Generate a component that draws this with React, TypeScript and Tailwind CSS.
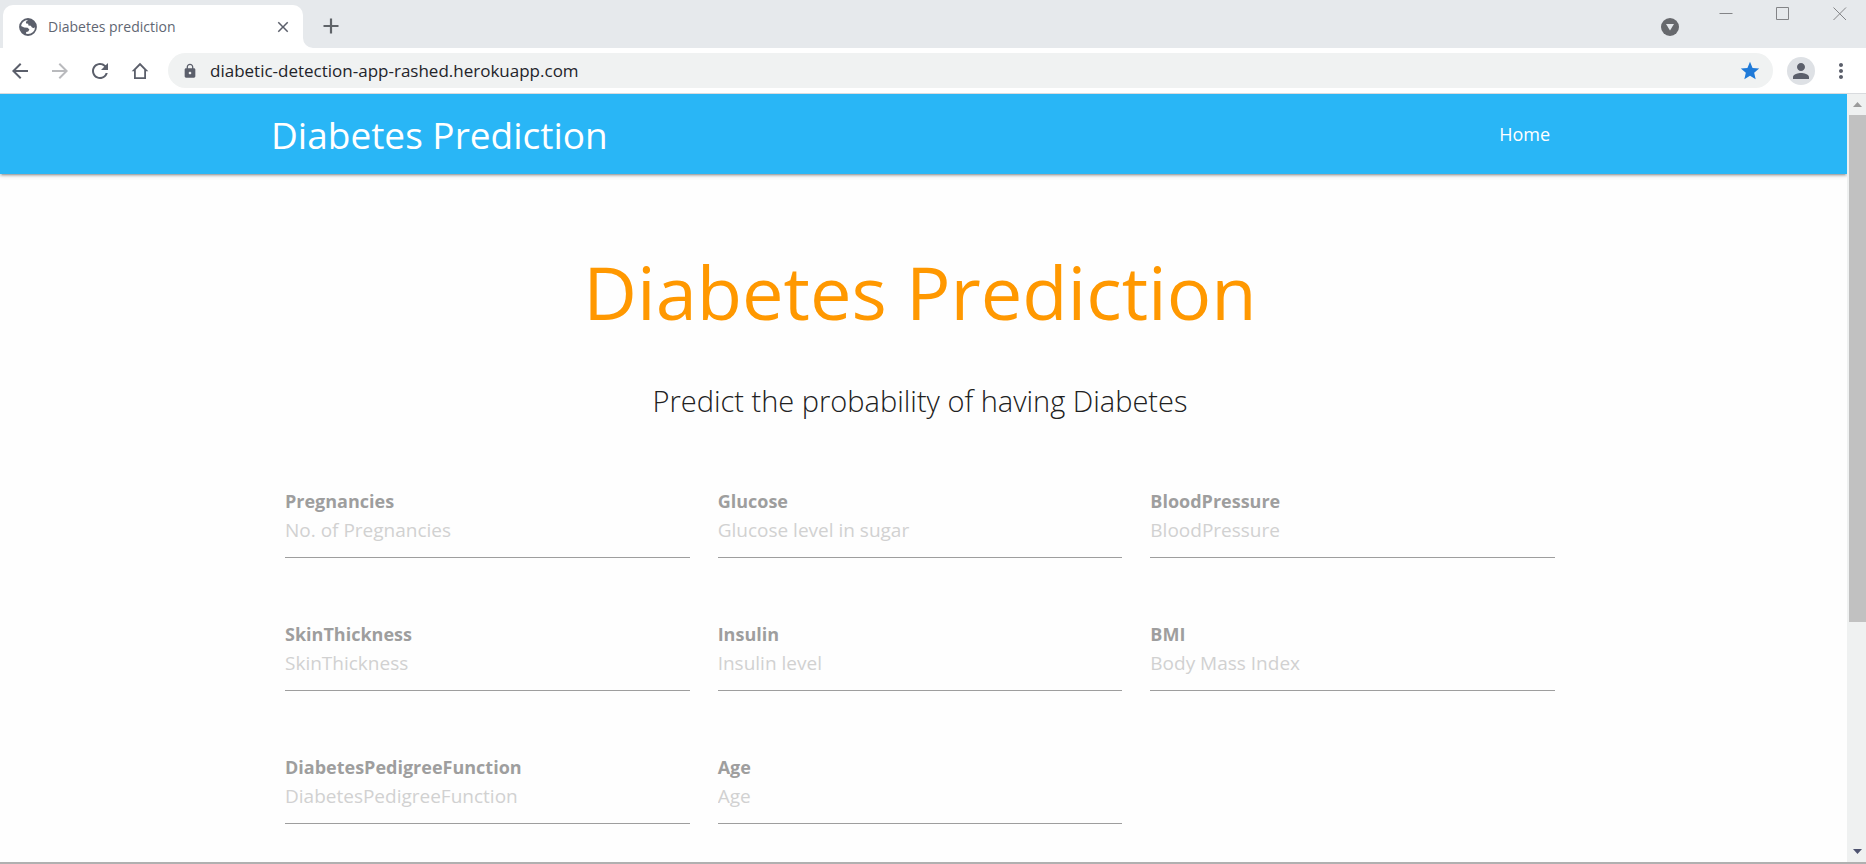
import React from "react";
import {
  MdArrowBack,
  MdArrowForward,
  MdClose,
  MdLock,
  MdMoreVert,
  MdPerson,
  MdRefresh,
  MdStar,
} from "react-icons/md";

type Field = { id: string; label: string; placeholder: string };

const fields: Field[] = [
  { id: "pregnancies", label: "Pregnancies", placeholder: "No. of Pregnancies" },
  { id: "glucose", label: "Glucose", placeholder: "Glucose level in sugar" },
  { id: "blood-pressure", label: "BloodPressure", placeholder: "BloodPressure" },
  { id: "skin-thickness", label: "SkinThickness", placeholder: "SkinThickness" },
  { id: "insulin", label: "Insulin", placeholder: "Insulin level" },
  { id: "bmi", label: "BMI", placeholder: "Body Mass Index" },
  { id: "pedigree", label: "DiabetesPedigreeFunction", placeholder: "DiabetesPedigreeFunction" },
  { id: "age", label: "Age", placeholder: "Age" },
];

function GlobeIcon() {
  return (
    <svg viewBox="0 0 18 18" className="size-[18px]" aria-hidden="true">
      <circle cx="9" cy="9" r="8" fill="#fff" stroke="#5b5f6b" strokeWidth="1.8" />
      <path
        fill="#5b5f6b"
        d="M8.6 1.2c3.8-.4 7.4 2.6 8 6.6l-1.4 2.4-2.2-.6-1.2-1.8-2.4-.4-.2-1.6-2-.2-.4-1.8 1.6-1zM1 7.6l4.2 1.8 3.4.4 1.8 1.8-1.2 2-2 .4-.4 2.6C3.600 15.400 1 12 1 7.600z"
      />
    </svg>
  );
}

function HomeIcon() {
  return (
    <svg viewBox="0 0 24 24" className="size-6" fill="currentColor" aria-hidden="true">
      <path
        fillRule="evenodd"
        d="M12 3.800 3.700 12.200H6V20h12v-7.800h2.300zM12 6.500l4.200 4.200v7.500H7.800v-7.500z"
      />
    </svg>
  );
}

function TabStrip() {
  return (
    <div className="flex h-12 items-start bg-[#e6e9ec] pl-[3px]">
      <div className="relative mt-[5px] flex h-[43px] w-[300px] items-center rounded-t-[10px] bg-white pr-[10px] pl-4">
        <GlobeIcon />
        <span className="ml-[11px] flex-1 text-sm text-[#5f6673]">Diabetes prediction</span>
        <button type="button" aria-label="Close tab" className="flex size-5 items-center justify-center text-[#5b5f6b]">
          <MdClose className="size-[18px]" />
        </button>
        <svg viewBox="0 0 10 10" className="absolute bottom-0 left-full size-[10px]" aria-hidden="true">
          <path d="M0 0v10h10A10 10 0 0 1 0 0z" fill="#fff" />
        </svg>
      </div>
      <button type="button" aria-label="New tab" className="mt-4 ml-[18px] flex size-5 items-center justify-center">
        <svg viewBox="0 0 16 16" className="size-4" stroke="#5f6368" strokeWidth="2.2" aria-hidden="true">
          <path d="M8 .5v15M.5 8h15" />
        </svg>
      </button>
      <div className="ml-auto flex items-start">
        <button type="button" aria-label="Search tabs" className="mt-[18px] mr-10">
          <svg viewBox="0 0 18 18" className="size-[18px]" aria-hidden="true">
            <circle cx="9" cy="9" r="9" fill="#67696d" />
            <path d="M5 6h8l-4 6.500z" fill="#e6e9ec" />
          </svg>
        </button>
        <div className="mt-[7px] mr-[19px] flex gap-[43px]">
          <button type="button" aria-label="Minimize">
            <svg viewBox="0 0 14 14" className="size-[14px]" stroke="#838487" aria-hidden="true">
              <path d="M.5 6.500h13" />
            </svg>
          </button>
          <button type="button" aria-label="Maximize">
            <svg viewBox="0 0 14 14" className="size-[14px]" fill="none" stroke="#838487" aria-hidden="true">
              <path d="M.5.5h12v12H.5z" />
            </svg>
          </button>
          <button type="button" aria-label="Close window">
            <svg viewBox="0 0 14 14" className="size-[14px]" stroke="#838487" aria-hidden="true">
              <path d="m.5.500 12.500 12.500M13 .5.5 13" />
            </svg>
          </button>
        </div>
      </div>
    </div>
  );
}

function Toolbar() {
  return (
    <div className="flex h-[46px] items-center border-b border-[#d9dbde] bg-white pr-[13px] pl-2 text-[#5b5f6b]">
      <div className="flex gap-4">
        <button type="button" aria-label="Back">
          <MdArrowBack className="size-6" />
        </button>
        <button type="button" aria-label="Forward" className="text-[#b9babd]">
          <MdArrowForward className="size-6" />
        </button>
        <button type="button" aria-label="Reload">
          <MdRefresh className="size-6" />
        </button>
        <button type="button" aria-label="Home page">
          <HomeIcon />
        </button>
      </div>
      <div className="ml-4 flex h-[35px] flex-1 items-center rounded-full bg-[#f0f2f2] pr-3 pl-[14px]">
        <MdLock className="size-4" aria-hidden="true" />
        <input
          aria-label="Address"
          defaultValue="diabetic-detection-app-rashed.herokuapp.com"
          className="ml-3 min-w-0 flex-1 bg-transparent text-[17px] text-[#23242a] outline-none"
        />
        <button type="button" aria-label="Bookmark" className="text-[#1f7ad8]">
          <MdStar className="size-[22px]" />
        </button>
      </div>
      <button
        type="button"
        aria-label="Profile"
        className="ml-[14px] flex size-7 items-center justify-center rounded-full bg-[#dee1e5]"
      >
        <MdPerson className="size-6" />
      </button>
      <button type="button" aria-label="Menu" className="ml-[14px]">
        <MdMoreVert className="size-6" />
      </button>
    </div>
  );
}

function Scrollbar() {
  return (
    <div className="flex w-[19px] shrink-0 flex-col bg-[#eff1f1] pl-[2px]" aria-hidden="true">
      <div className="flex h-[21px] items-center justify-center">
        <svg viewBox="0 0 9 5" className="h-[5px] w-[9px]">
          <path d="M4.500 0 9 5H0z" fill="#9b9b9b" />
        </svg>
      </div>
      <div className="h-[66%] bg-[#c1c1c1]" />
      <div className="mt-auto flex h-[21px] items-center justify-center">
        <svg viewBox="0 0 9 5" className="h-[5px] w-[9px]">
          <path d="M0 0h9L4.500 5z" fill="#4e5370" />
        </svg>
      </div>
    </div>
  );
}

function FormField({ id, label, placeholder }: Field) {
  return (
    <div className="flex flex-col">
      <label htmlFor={id} className="text-lg leading-6 font-bold text-[#9e9e9e]">
        {label}
      </label>
      <input
        id={id}
        placeholder={placeholder}
        className="h-[45px] w-full border-b border-[#9e9e9e] bg-transparent pb-[11px] text-[19px] text-black outline-none placeholder:text-[#d1d1d1]"
      />
    </div>
  );
}

export default function App() {
  return (
    <div className="flex h-screen flex-col overflow-hidden bg-[#fefefe] font-['Segoe_UI','Open_Sans',sans-serif]">
      <TabStrip />
      <Toolbar />
      <div className="flex min-h-0 flex-1 border-b-2 border-[#b0b0b0]">
        <div className="min-w-0 flex-1 overflow-hidden">
          <nav className="bg-[#29b6f6] pr-[7px] text-white shadow-[0_2px_2px_0_rgba(0,0,0,0.14),0_3px_1px_-2px_rgba(0,0,0,0.12),0_1px_5px_0_rgba(0,0,0,0.2)]">
            <div className="mx-auto flex h-20 w-full max-w-[1298px] items-center justify-between">
              <a href="#" className="pt-[2px] text-[37px]">
                Diabetes Prediction
              </a>
              <a href="#" className="px-[19px] text-lg">
                Home
              </a>
            </div>
          </nav>
          <main className="pr-[7px]">
            <div className="mx-auto w-full max-w-[1298px] px-[14px]">
              <h1 className="mt-[66px] text-center text-[74px] leading-[104px] text-[#ff9800]">Diabetes Prediction</h1>
              <h2 className="mt-9 text-center text-[29px] leading-[42px] font-light text-[#212121]">
                Predict the probability of having Diabetes
              </h2>
              <form className="mt-[67px] grid grid-cols-3 gap-x-7 gap-y-16">
                {fields.map((field) => (
                  <FormField key={field.id} {...field} />
                ))}
              </form>
            </div>
          </main>
        </div>
        <Scrollbar />
      </div>
    </div>
  );
}
